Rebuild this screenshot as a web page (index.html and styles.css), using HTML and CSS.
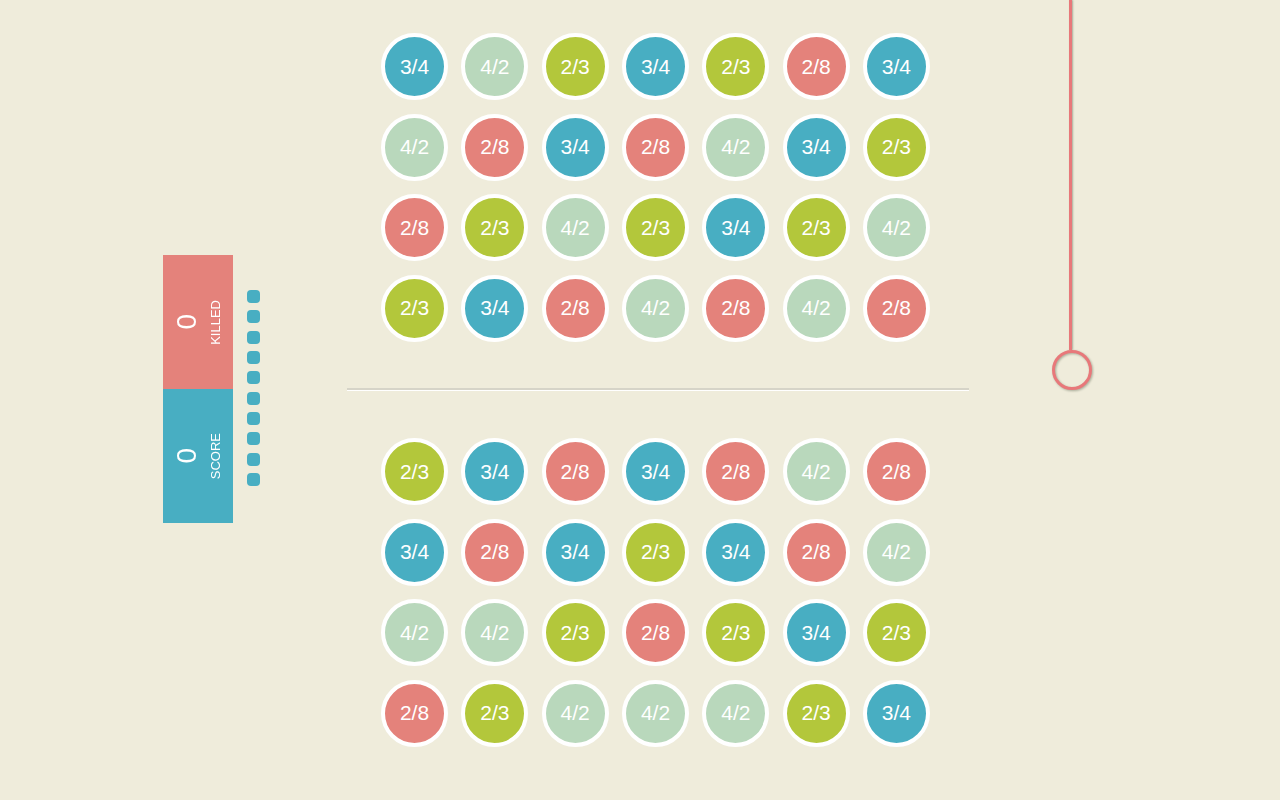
FILE: index.html
```
<!DOCTYPE html>
<html lang="en">
<head>
<meta charset="utf-8">
<meta name="viewport" content="width=device-width, initial-scale=1">
<title>Fractions</title>
<link rel="stylesheet" href="styles.css">
</head>
<body>
<aside class="side">
  <div class="stats">
    <div class="stat red"><span class="value">0</span><span class="label">KILLED</span></div>
    <div class="stat blue"><span class="value">0</span><span class="label">SCORE</span></div>
  </div>
  <div class="lives"><i></i><i></i><i></i><i></i><i></i><i></i><i></i><i></i><i></i><i></i></div>
</aside>
<main class="game">
  <section class="board">
    <button class="ball blue">3/4</button><button class="ball mint">4/2</button><button class="ball green">2/3</button><button class="ball blue">3/4</button><button class="ball green">2/3</button><button class="ball red">2/8</button><button class="ball blue">3/4</button>
    <button class="ball mint">4/2</button><button class="ball red">2/8</button><button class="ball blue">3/4</button><button class="ball red">2/8</button><button class="ball mint">4/2</button><button class="ball blue">3/4</button><button class="ball green">2/3</button>
    <button class="ball red">2/8</button><button class="ball green">2/3</button><button class="ball mint">4/2</button><button class="ball green">2/3</button><button class="ball blue">3/4</button><button class="ball green">2/3</button><button class="ball mint">4/2</button>
    <button class="ball green">2/3</button><button class="ball blue">3/4</button><button class="ball red">2/8</button><button class="ball mint">4/2</button><button class="ball red">2/8</button><button class="ball mint">4/2</button><button class="ball red">2/8</button>
  </section>
  <hr class="divider">
  <section class="board">
    <button class="ball green">2/3</button><button class="ball blue">3/4</button><button class="ball red">2/8</button><button class="ball blue">3/4</button><button class="ball red">2/8</button><button class="ball mint">4/2</button><button class="ball red">2/8</button>
    <button class="ball blue">3/4</button><button class="ball red">2/8</button><button class="ball blue">3/4</button><button class="ball green">2/3</button><button class="ball blue">3/4</button><button class="ball red">2/8</button><button class="ball mint">4/2</button>
    <button class="ball mint">4/2</button><button class="ball mint">4/2</button><button class="ball green">2/3</button><button class="ball red">2/8</button><button class="ball green">2/3</button><button class="ball blue">3/4</button><button class="ball green">2/3</button>
    <button class="ball red">2/8</button><button class="ball green">2/3</button><button class="ball mint">4/2</button><button class="ball mint">4/2</button><button class="ball mint">4/2</button><button class="ball green">2/3</button><button class="ball blue">3/4</button>
  </section>
</main>
<aside class="pull">
  <div class="cord"></div>
  <div class="ring"></div>
</aside>
</body>
</html>
```
FILE: styles.css
```
* { box-sizing: border-box; }

body {
  margin: 0;
  min-height: 100vh;
  display: grid;
  grid-template-columns: 347fr 622fr 311fr;
  background: #efecdb;
  color: #fff;
  font-family: "Liberation Sans", Arial, sans-serif;
}

.blue { background: #48aec2; }
.red { background: #e4827b; }
.green { background: #b3c73b; }
.mint { background: #b9d8bc; }

.side {
  display: flex;
  align-items: center;
  justify-content: flex-end;
  gap: 14px;
  padding: 0 87px 22px 0;
}

.stat {
  display: flex;
  align-items: center;
  justify-content: center;
  gap: 8px;
  width: 70px;
  height: 134px;
}

.value,
.label {
  writing-mode: vertical-rl;
  transform: rotate(180deg);
}

.value { font-size: 28px; line-height: 28px; }
.label { font-size: 13px; line-height: 14px; }

.lives {
  display: flex;
  flex-direction: column;
  justify-content: space-between;
  height: 198px;
  padding-bottom: 2px;
}

.lives i {
  width: 13px;
  height: 13px;
  border-radius: 4px;
  background: #48aec2;
}

.game { padding-top: 33px; }

.board {
  display: grid;
  grid-template-columns: repeat(7, 67px);
  justify-content: space-between;
  align-content: space-between;
  min-height: 309px;
  padding: 0 39px 0 34px;
}

.ball {
  width: 67px;
  height: 67px;
  padding: 0;
  border: 4px solid #fff;
  border-radius: 50%;
  color: #fff;
  font: 21px/24px "Liberation Sans", Arial, sans-serif;
}

.divider {
  height: 3px;
  margin: 46px 0 47px;
  border: 0;
  border-top: 2px solid #d6d4c8;
  background: #fff;
}

.pull { padding-left: 83px; }

.cord {
  width: 3px;
  height: 350px;
  margin-left: 17px;
  background: #e8787a;
  box-shadow: 1px 0 2px #a8ab98;
}

.ring {
  width: 40px;
  height: 40px;
  border: 3px solid #e8787a;
  border-radius: 50%;
  filter: drop-shadow(1px 1px 1px #a8ab98);
}
```
